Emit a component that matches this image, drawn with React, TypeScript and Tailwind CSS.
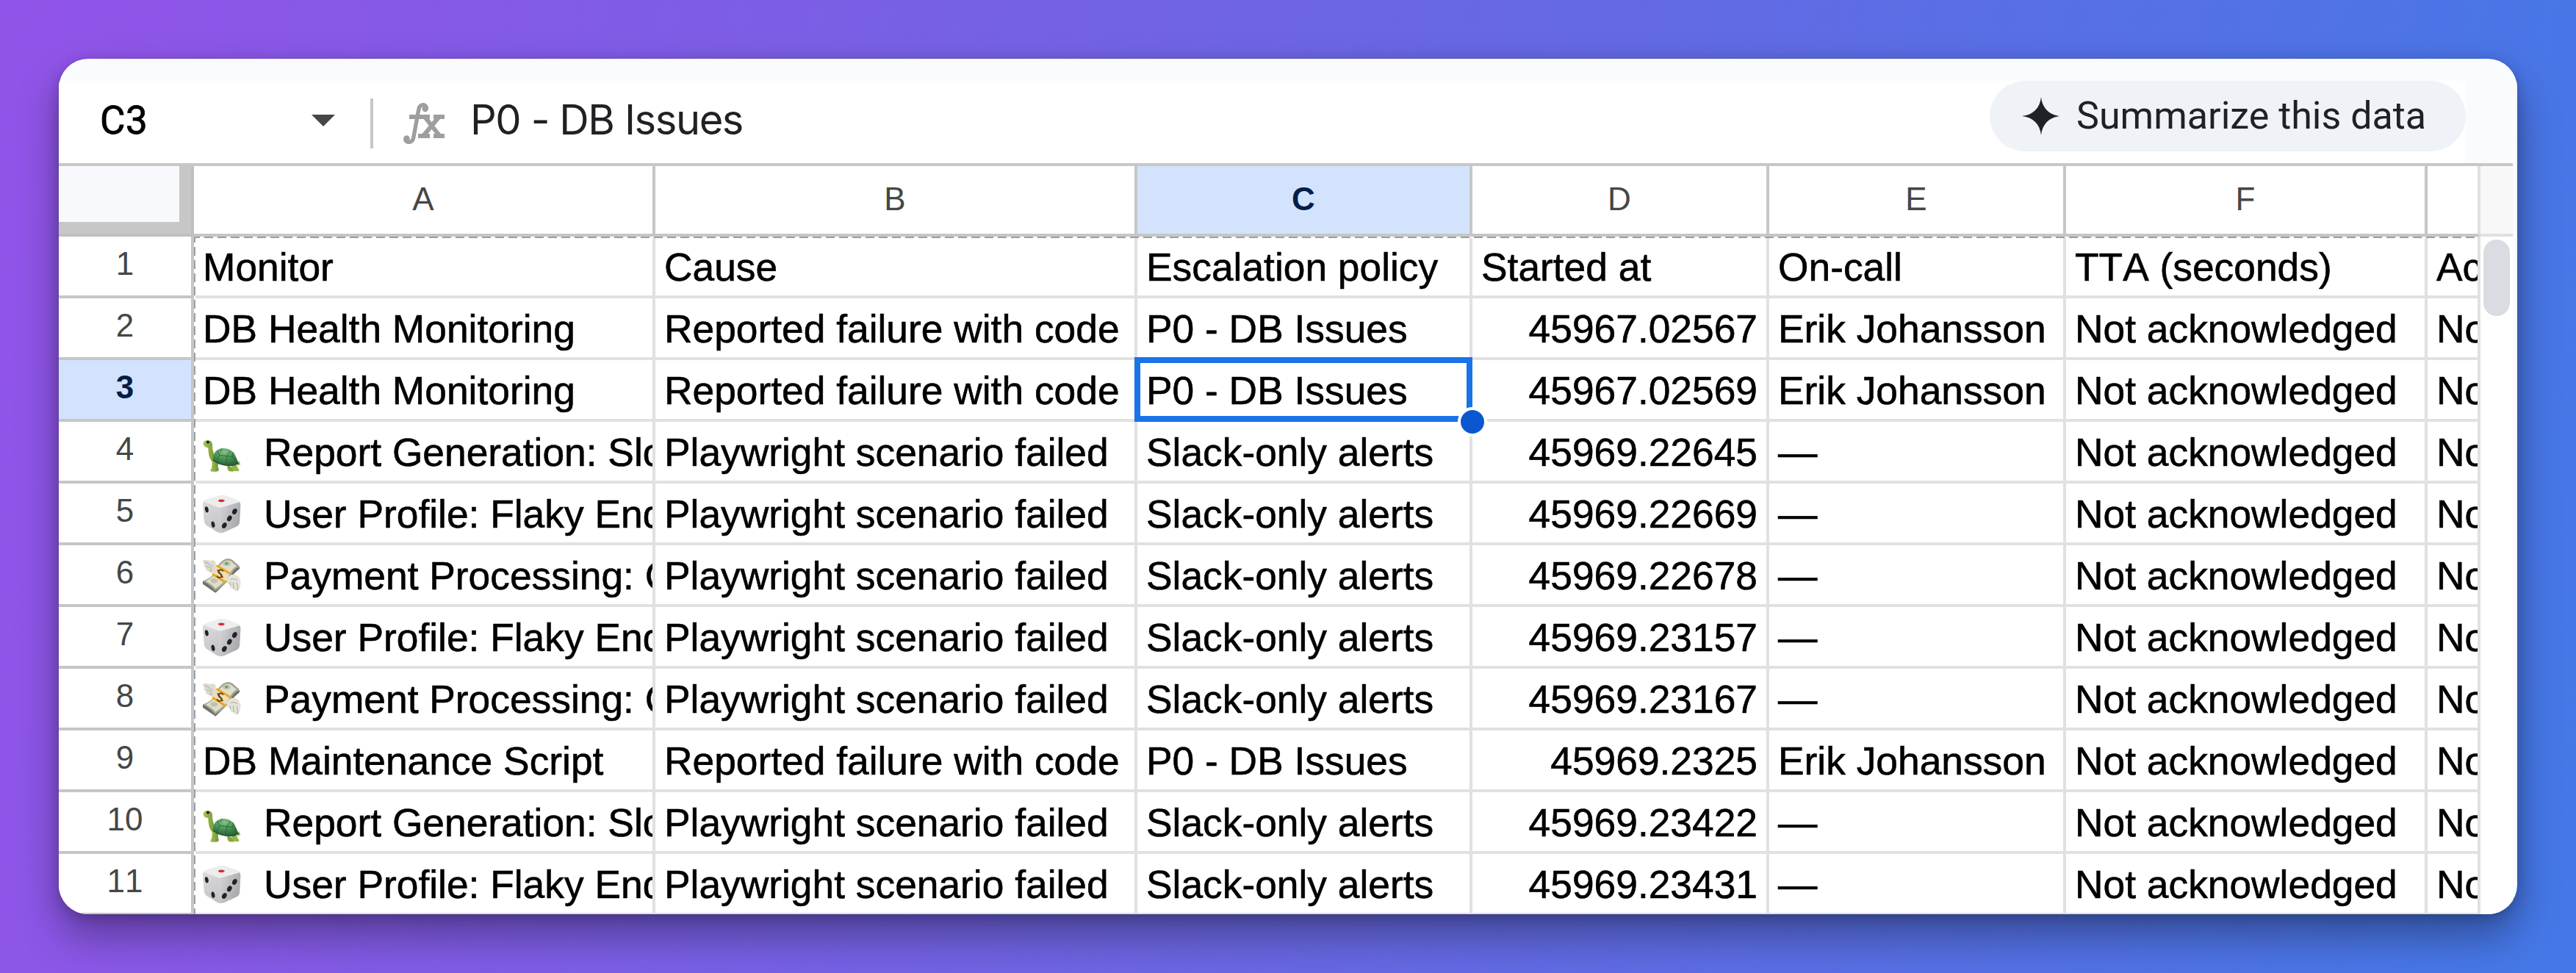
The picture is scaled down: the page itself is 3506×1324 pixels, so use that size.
import React from 'react';
import clsx from 'clsx';

type EmojiName = 'turtle' | 'dice' | 'money';

interface Row {
  emoji?: EmojiName;
  monitor: string;
  cause: string;
  policy: string;
  startedAt: string;
  onCall: string;
}

const COLUMNS = [
  { label: 'A', width: 'w-[628px]' },
  { label: 'B', width: 'w-[656px]' },
  { label: 'C', width: 'w-[456px]' },
  { label: 'D', width: 'w-[404px]' },
  { label: 'E', width: 'w-[404px]' },
  { label: 'F', width: 'w-[492px]' },
  { label: '', width: 'w-[72px]' },
];

const HEADINGS = ['Monitor', 'Cause', 'Escalation policy', 'Started at', 'On-call', 'TTA (seconds)', 'Ack'];

const reported = { cause: 'Reported failure with code', policy: 'P0 - DB Issues', onCall: 'Erik Johansson' };
const playwright = { cause: 'Playwright scenario failed', policy: 'Slack-only alerts', onCall: '—' };

const report = { emoji: 'turtle' as const, monitor: 'Report Generation: Slo', ...playwright };
const profile = { emoji: 'dice' as const, monitor: 'User Profile: Flaky End', ...playwright };
const payment = { emoji: 'money' as const, monitor: 'Payment Processing: C', ...playwright };

const ROWS: Row[] = [
  { monitor: 'DB Health Monitoring', startedAt: '45967.02567', ...reported },
  { monitor: 'DB Health Monitoring', startedAt: '45967.02569', ...reported },
  { ...report, startedAt: '45969.22645' },
  { ...profile, startedAt: '45969.22669' },
  { ...payment, startedAt: '45969.22678' },
  { ...profile, startedAt: '45969.23157' },
  { ...payment, startedAt: '45969.23167' },
  { monitor: 'DB Maintenance Script', startedAt: '45969.2325', ...reported },
  { ...report, startedAt: '45969.23422' },
  { ...profile, startedAt: '45969.23431' },
];

function Turtle() {
  return (
    <svg viewBox="0 0 156 156" className="size-[52px]">
      <defs>
        <radialGradient id="shell" cx="0.45" cy="0.2" r="0.9">
          <stop offset="0" stopColor="#7fc583" />
          <stop offset="0.5" stopColor="#438a4f" />
          <stop offset="1" stopColor="#1c5230" />
        </radialGradient>
        <linearGradient id="skin" x1="0" x2="1">
          <stop offset="0" stopColor="#a5c455" />
          <stop offset="1" stopColor="#6f9030" />
        </linearGradient>
      </defs>
      <path d="M138 122 L150 112 L149 121 L155 124 L144 130 Z" fill="#7f9f3c" />
      <path d="M100 128 Q98 146 108 154 L124 155 Q130 150 120 138 Z" fill="#87a83c" />
      <path d="M118 130 Q118 146 126 153 L146 154 Q152 147 142 140 L138 126 Z" fill="#94b648" />
      <path d="M2 42 Q1 28 19 27 Q39 27 39 46 Q38 62 44 78 Q50 92 58 110 L50 124 Q32 112 26 92 Q22 76 22 58 Q4 56 2 42 Z" fill="url(#skin)" />
      <path d="M38 112 L64 114 L62 136 Q68 148 62 154 L52 155 L34 155 Q27 149 36 142 Q39 128 38 112 Z" fill="url(#skin)" />
      <path d="M42 108 Q42 66 78 60 Q112 57 130 84 Q140 104 146 121 Q130 136 100 132 Q66 128 42 108 Z" fill="url(#shell)" />
      <path d="M42 108 Q66 126 98 129 Q130 132 146 119" fill="none" stroke="#275b34" strokeWidth="5" />
      <path d="M60 70 L68 88 L58 112 M68 88 L98 92 L112 72 M98 92 L94 124 M98 92 L122 94 L136 112 M78 61 L72 74 M122 94 L124 76" fill="none" stroke="#255d35" strokeWidth="2.5" />
      <circle cx="21" cy="35" r="5.5" fill="#111" />
    </svg>
  );
}

function Dice() {
  return (
    <svg viewBox="0 0 156 156" className="size-[52px]">
      <defs>
        <linearGradient id="faceL" x1="0" x2="0.3" y2="1">
          <stop offset="0" stopColor="#dcdcde" />
          <stop offset="1" stopColor="#c6c6ca" />
        </linearGradient>
        <linearGradient id="faceR" x1="0" x2="1" y2="0.4">
          <stop offset="0" stopColor="#d8d8db" />
          <stop offset="1" stopColor="#a9a9ae" />
        </linearGradient>
      </defs>
      <path d="M66 2 Q80 -2 92 2 L142 20 Q154 26 154 42 L150 112 Q148 122 140 126 L88 150 Q72 156 60 150 L18 124 Q7 117 6 104 L0 40 Q0 24 14 19 Z" fill="#cfcfd3" />
      <path d="M4 24 L62 48 Q66 100 66 152 Q58 150 50 144 L18 124 Q7 117 6 104 L0 40 Q0 30 4 24 Z" fill="url(#faceL)" />
      <path d="M150 27 L76 48 Q64 52 64 66 L66 152 Q78 155 88 150 L140 126 Q148 122 150 112 L154 42 Q154 32 150 27 Z" fill="url(#faceR)" />
      <path d="M66 2 Q80 -2 92 2 L142 20 Q148 23 150 28 L80 48 Q68 52 58 47 L4 26 Q8 20 14 19 Z" fill="#ededee" />
      <ellipse cx="76" cy="22" rx="13" ry="5.5" fill="#dd2a2a" />
      <g fill="#222225">
        <ellipse cx="16" cy="58" rx="7" ry="12.5" transform="rotate(-12 16 58)" />
        <ellipse cx="42" cy="119" rx="7" ry="12.5" transform="rotate(-12 42 119)" />
        <ellipse cx="130" cy="66" rx="9" ry="12.5" transform="rotate(28 130 66)" />
        <ellipse cx="109" cy="94" rx="9" ry="12.5" transform="rotate(28 109 94)" />
        <ellipse cx="88" cy="123" rx="9" ry="12.5" transform="rotate(28 88 123)" />
      </g>
    </svg>
  );
}

function Money() {
  return (
    <svg viewBox="0 0 156 156" className="size-[52px]">
      <path d="M0 14 Q14 8 30 16 Q44 8 52 20 L54 42 L42 64 Q28 68 24 58 Q10 56 12 44 Q2 38 6 28 Q0 22 0 14 Z" fill="#dedbd0" />
      <path d="M8 22 Q22 22 40 42 M14 38 Q26 38 38 50 M26 54 Q32 54 38 58" fill="none" stroke="#a9a698" strokeWidth="3" />
      <path d="M0 98 L0 110 L52 146 L112 88 Q128 64 150 48 L150 38 L40 88 Z" fill="#6f7068" />
      <path d="M0 98 Q34 86 48 64 Q62 26 84 12 Q104 0 122 12 Q134 24 150 36 Q128 48 112 78 Q94 114 50 138 Q30 112 0 98 Z" fill="#a5a698" />
      <path d="M12 98 Q40 84 54 62 Q68 30 88 18 Q104 10 116 18 Q126 28 138 36 Q118 50 104 76 Q88 106 52 128 Q34 108 12 98 Z" fill="#dfdfcb" />
      <ellipse cx="98" cy="27" rx="16" ry="10" fill="#b9c4ab" />
      <ellipse cx="97" cy="26" rx="6" ry="5" fill="#5d9a72" />
      <ellipse cx="46" cy="97" rx="15" ry="10" fill="#c0c3ae" />
      <path d="M56 34 L110 68 L92 106 L38 72 Z" fill="#eadfba" />
      <path d="M58 30 L114 64 L110 72 L54 38 Z M41 65 L96 99 L91 108 L37 73 Z" fill="#eda61f" />
      <path d="M84 58 Q76 48 68 54 Q60 62 70 68 Q82 74 74 82 Q64 88 58 76 M60 52 L82 84" fill="none" stroke="#63470f" strokeWidth="6" />
      <path d="M98 92 Q110 68 126 72 Q142 70 148 84 Q158 98 154 112 Q152 136 142 138 Q130 142 126 130 Q112 132 112 116 Q98 110 98 92 Z" fill="#e6e3d8" />
      <path d="M114 90 Q128 86 142 94 M124 104 Q124 118 128 130 M138 104 Q144 120 142 136 M112 102 Q112 110 114 118" fill="none" stroke="#aaa799" strokeWidth="3" />
    </svg>
  );
}

function Emoji({ name }: { name: EmojiName }) {
  return (
    <span className="mr-[31px] shrink-0">
      {name === 'turtle' && <Turtle />}
      {name === 'dice' && <Dice />}
      {name === 'money' && <Money />}
    </span>
  );
}

function FunctionIcon() {
  return (
    <svg viewBox="0 0 56 56" className="size-14" fill="none" stroke="#9e9e9e">
      <circle cx="29.7" cy="8" r="4.2" fill="#9e9e9e" stroke="none" />
      <circle cx="4.4" cy="48.4" r="4.2" fill="#9e9e9e" stroke="none" />
      <path d="M31.5 8 C31.5 1 22 0.5 20.8 9 L13.8 47 C12.4 55 3 55.2 2.6 49" strokeWidth="5.4" />
      <path d="M8 19 H36 M41 19 H56 M20 45 H36 M41 45 H56" strokeWidth="6" />
      <path d="M29 19 L49.5 45 M48.5 19 L27 45" strokeWidth="6" />
    </svg>
  );
}

function FormulaBar() {
  return (
    <div className="flex h-28 shrink-0 bg-[#fafbfd]">
      <div className="flex h-28 w-[3276px] items-start bg-white">
        <div className="flex h-24 w-[424px] items-center justify-between pl-14 pr-[48px]">
          <span className="pt-3 font-[Roboto,sans-serif] text-[53px] leading-none tracking-[0.5px] text-black [-webkit-text-stroke:0.8px]">
            C3
          </span>
          <svg viewBox="0 0 32 16" className="mt-3 h-4 w-8">
            <path d="M0 0 H32 L16 16 Z" fill="#444746" />
          </svg>
        </div>
        <div className="mt-6 h-[68px] w-1 bg-[#c7c7c7]" />
        <div className="ml-[41px] mt-[30px]">
          <FunctionIcon />
        </div>
        <div className="ml-[35px] mt-[25px] grow font-[Inter,sans-serif] text-[56px] leading-[56px] tracking-[-1.4px] text-[#202124]">
          P0 - DB Issues
        </div>
        <button className="flex h-24 w-[648px] items-center rounded-full bg-[#eff3f8] pl-11">
          <svg viewBox="0 0 52 52" className="size-[52px]">
            <path d="M26 0 C27.5 15 37 24.5 52 26 C37 27.5 27.5 37 26 52 C24.5 37 15 27.5 0 26 C15 24.5 24.5 15 26 0 Z" fill="#202124" />
          </svg>
          <span className="ml-[22px] whitespace-nowrap font-[Roboto,sans-serif] text-[52px] leading-none text-[#202124]">
            Summarize this data
          </span>
        </button>
      </div>
    </div>
  );
}

function ColumnHeader() {
  return (
    <div className="flex h-24 text-[44px] text-[#444746]">
      <div className="h-24 w-[184px] border-b-4 border-r-4 border-[#c0c0c0] bg-[#c7c7c7]">
        <div className="h-[76px] w-[164px] bg-[#f8f9fc]" />
      </div>
      {COLUMNS.map((col, i) => (
        <div
          key={i}
          className={clsx(
            'flex items-center justify-center border-b-4 border-r-4 pb-0.5',
            col.width,
            i === 6 ? 'border-b-[#c4c7c5] border-r-[#e0e0e0]' : 'border-[#c4c7c5]',
            col.label === 'C' && 'bg-[#d3e3fd] font-bold text-[#041e49]',
          )}
        >
          {col.label}
        </div>
      ))}
    </div>
  );
}

interface SheetRowProps {
  index: number;
  emoji?: EmojiName;
  cells: string[];
}

function SheetRow({ index, emoji, cells }: SheetRowProps) {
  const isActive = index === 3;

  return (
    <div className="flex h-[84px] shrink-0">
      <div
        className={clsx(
          'flex w-[184px] items-center justify-center border-b-4 border-r-4 border-[#c4c7c5] pb-1.5 text-[44px]',
          isActive ? 'bg-[#d3e3fd] font-bold text-[#041e49]' : 'text-[#444746]',
        )}
      >
        {index}
      </div>
      {cells.map((text, i) => (
        <div key={i} className={clsx('relative border-b-4 border-r-4 border-[#e1e1e1]', COLUMNS[i].width)}>
          <div
            className={clsx(
              'flex h-20 items-center overflow-hidden whitespace-nowrap px-3 pt-[3px] text-[53.33px] leading-none text-black [-webkit-text-stroke:0.6px]',
              i === 3 && index > 1 && 'justify-end',
            )}
          >
            {i === 0 && emoji && <Emoji name={emoji} />}
            <span>{text}</span>
          </div>
          {isActive && i === 2 && (
            <>
              <div className="absolute -left-1 -top-1 z-10 h-[88px] w-[460px] border-8 border-[#1a73e8]" />
              <div className="absolute left-[436px] top-[64px] z-20 size-10 rounded-full border-4 border-white bg-[#0b57d0]" />
            </>
          )}
        </div>
      ))}
    </div>
  );
}

function Scrollbar() {
  return (
    <div className="w-11 shrink-0 bg-white">
      <div className="h-24 border-b-4 border-[#e0e0e0] bg-[#f8f8f8]" />
      <div className="mx-1 mt-1 h-[104px] rounded-full bg-[#d9dce1]" />
    </div>
  );
}

export default function App() {
  return (
    <div className="h-[1324px] w-[3506px] bg-[linear-gradient(100deg,#9254e9_0%,#6b66e3_50%,#4478e7_100%)] p-20 font-['Liberation_Sans',Arial,sans-serif]">
      <div className="rounded-[40px] shadow-[0_28px_56px_rgba(0,0,0,0.36),0_4px_16px_rgba(0,0,0,0.18)]">
        <div className="flex h-[1164px] flex-col overflow-hidden rounded-[40px] bg-[#fafbfd] pt-[30px]">
          <FormulaBar />
          <div className="flex grow overflow-hidden">
            <div className="flex w-[3340px] shrink-0 flex-col border-t-4 border-[#c7c7c7] bg-white">
              <div className="flex [font-kerning:none]">
                <div className="relative w-[3296px] shrink-0">
                  <ColumnHeader />
                  <SheetRow index={1} cells={HEADINGS} />
                  {ROWS.map((row, i) => (
                    <SheetRow
                      key={i}
                      index={i + 2}
                      emoji={row.emoji}
                      cells={[row.monitor, row.cause, row.policy, row.startedAt, row.onCall, 'Not acknowledged', 'Not']}
                    />
                  ))}
                  {/* dashed outline of the table range */}
                  <div className="absolute left-[184px] right-1 top-24 h-0.5 bg-[repeating-linear-gradient(90deg,#9aa0a6_0_8px,white_8px_14px,#9aa0a6_14px_18px)]" />
                  <div className="absolute bottom-0 left-[184px] top-24 w-0.5 bg-[repeating-linear-gradient(180deg,#9aa0a6_0_8px,white_8px_14px,#9aa0a6_14px_18px)]" />
                </div>
                <Scrollbar />
              </div>
            </div>
          </div>
        </div>
      </div>
    </div>
  );
}
